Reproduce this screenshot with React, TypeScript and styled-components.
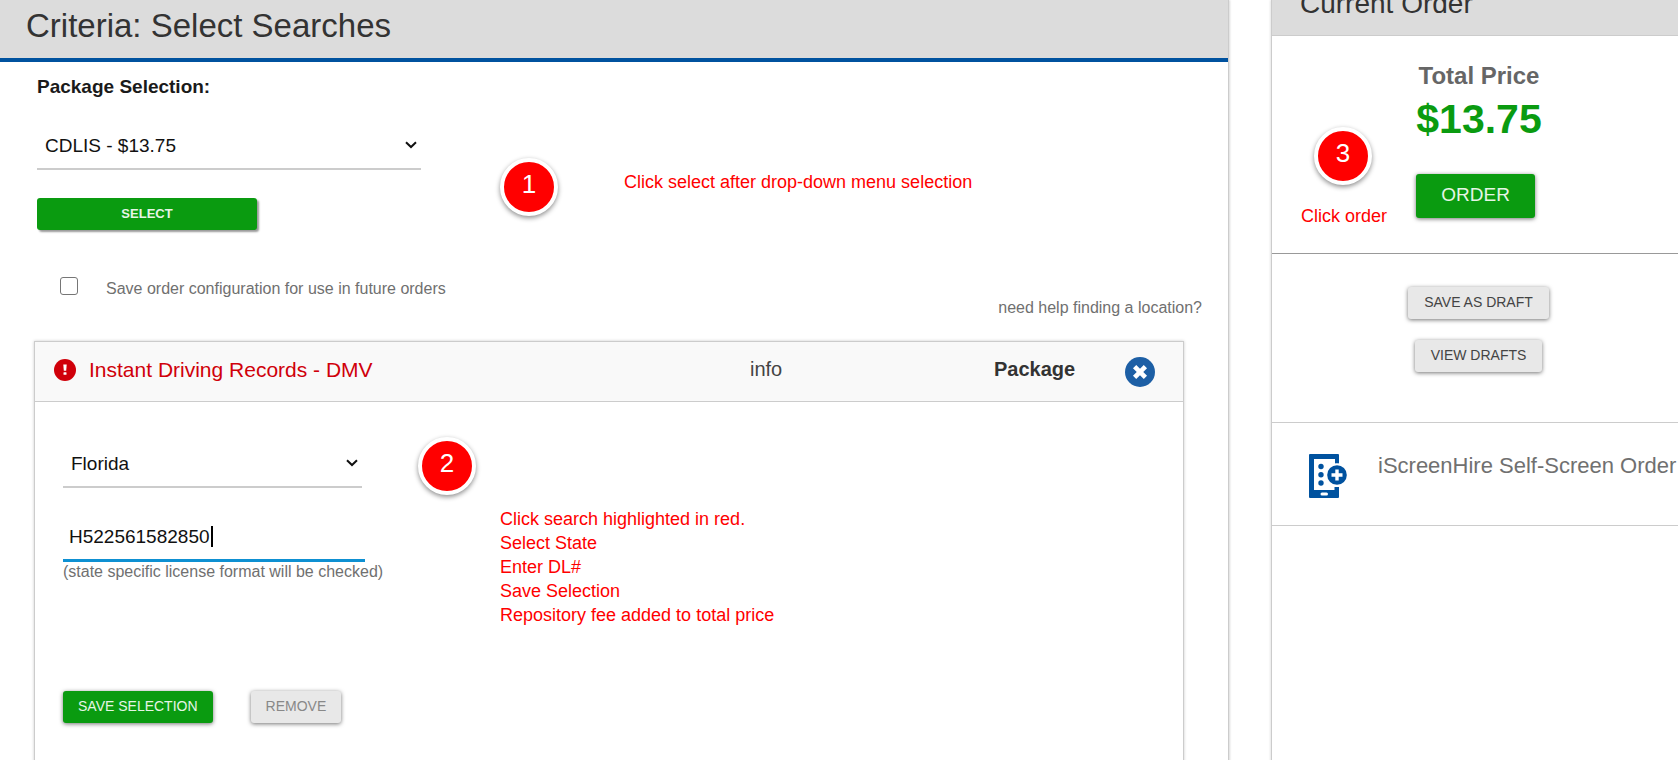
import React from "react";
import styled, { createGlobalStyle } from "styled-components";

const GlobalStyle = createGlobalStyle`
  * { box-sizing: border-box; }
  body {
    margin: 0;
    background: #fff;
    color: #333;
    font-family: "Liberation Sans", Arial, sans-serif;
  }
  button, input, select { font-family: inherit; margin: 0; }
`;

const Page = styled.div`
  display: flex;
  gap: 42px;
  min-height: 100vh;
  overflow: hidden;
`;

const Main = styled.main`
  position: relative;
  flex: 1;
  min-width: 0;
  display: flex;
  flex-direction: column;
  border-right: 1px solid #ccc;
  box-shadow: 1px 0 2px rgba(0, 0, 0, 0.15);
`;

const MainHeader = styled.header`
  padding: 0 26px 6px;
  background: #dcdcdc;
  border-bottom: 4px solid #00529f;
`;

const Title = styled.h1`
  margin: 0;
  font-size: 33px;
  font-weight: 400;
  line-height: 52px;
`;

const PackageForm = styled.section`
  display: flex;
  flex-direction: column;
  align-items: flex-start;
  padding: 13px 26px 0 37px;
`;

const FieldLabel = styled.label`
  color: #1a1a1a;
  font-size: 19px;
  font-weight: 700;
  line-height: 24px;
`;

const SelectWrap = styled.div<{ $width: number; $top?: number }>`
  position: relative;
  width: ${(p) => p.$width}px;
  margin-top: ${(p) => p.$top ?? 0}px;
`;

const Select = styled.select`
  display: block;
  width: 100%;
  height: 46px;
  padding: 0 32px 2px 8px;
  appearance: none;
  border: 0;
  border-bottom: 2px solid #ccc;
  border-radius: 0;
  outline: 0;
  background: transparent;
  color: #111;
  font-size: 19px;
`;

const ChevronIcon = styled.svg`
  position: absolute;
  top: 17px;
  right: 4px;
  pointer-events: none;
`;

const Button = styled.button<{ $tone?: "green" | "grey" | "muted" }>`
  height: 32px;
  padding: 0 16px 2px;
  border: 0;
  border-radius: 3px;
  background: ${(p) => (p.$tone === "green" ? "#0a9b10" : "#e8e8e8")};
  color: ${(p) =>
    p.$tone === "green" ? "#e6f5e6" : p.$tone === "muted" ? "#888" : "#444"};
  box-shadow: 0 1px 4px rgba(0, 0, 0, 0.55);
  font-size: 14px;
  white-space: nowrap;
`;

const SelectButton = styled(Button)`
  width: 220px;
  margin-top: 28px;
  box-shadow: 2px 2px 2px rgba(0, 0, 0, 0.4);
  font-size: 13px;
  font-weight: 700;
`;

const OrderButton = styled(Button)`
  height: 44px;
  padding: 0 25px 2px;
  font-size: 19px;
`;

const OptionsRow = styled.div`
  align-self: stretch;
  display: flex;
  justify-content: space-between;
  align-items: flex-start;
  margin-top: 47px;
  color: #707070;
  font-size: 16px;
`;

const CheckLabel = styled.label`
  display: flex;
  gap: 28px;
  padding-left: 23px;
  line-height: 24px;
`;

const Checkbox = styled.input`
  width: 18px;
  height: 18px;
  appearance: none;
  border: 1px solid #767676;
  border-radius: 3px;
  background: #fff;
`;

const HelpLink = styled.a`
  margin-top: 21px;
  color: inherit;
  line-height: 20px;
  text-decoration: none;
`;

const Card = styled.section`
  flex: 1;
  margin: 23px 44px 0 34px;
  border: 1px solid #ccc;
  border-bottom: 0;
  box-shadow: 0 0 3px rgba(0, 0, 0, 0.2);
`;

const CardHeader = styled.header`
  display: grid;
  grid-template-columns: minmax(0, 1fr) 244px 131px 58px;
  align-items: center;
  height: 60px;
  padding-bottom: 4px;
  border-bottom: 1px solid #ccc;
  background: #f9f9f9;
  font-size: 21px;
`;

const CardTitle = styled.h2`
  display: flex;
  align-items: center;
  gap: 13px;
  margin: 0;
  padding-left: 19px;
  color: #d0000a;
  font-size: inherit;
  font-weight: 400;
`;

const InfoLink = styled.a`
  color: #444;
  font-size: 20px;
  text-decoration: none;
`;

const PackageTag = styled.strong`
  font-size: 20px;
`;

const IconButton = styled.button`
  display: flex;
  width: 30px;
  padding: 4px 0 0;
  border: 0;
  background: none;
`;

const CardBody = styled.div`
  padding: 40px 28px;
`;

const LicenseField = styled.div`
  position: relative;
  width: 302px;
  margin-top: 27px;
`;

const LicenseInput = styled.input`
  display: block;
  width: 100%;
  height: 47px;
  padding: 0 6px;
  border: 0;
  border-bottom: 3px solid #0e90d2;
  outline: 0;
  background: transparent;
  color: #111;
  font-size: 19px;
`;

const Caret = styled.span`
  position: absolute;
  top: 11px;
  left: 148px;
  width: 2px;
  height: 21px;
  background: #000;
`;

const Hint = styled.p`
  margin: 0;
  color: #707070;
  font-size: 16px;
  line-height: 20px;
`;

const Actions = styled.div`
  display: flex;
  gap: 38px;
  margin-top: 109px;

  ${Button} {
    padding: 0 15px 2px;
  }
`;

const Sidebar = styled.aside`
  position: relative;
  flex: 0 0 407px;
  border-left: 1px solid #ccc;
  box-shadow: -1px 0 2px rgba(0, 0, 0, 0.1);
`;

const SideHeader = styled.header`
  height: 64px;
  margin-top: -28px;
  padding-left: 28px;
  border-bottom: 1px solid #ccc;
  background: #dcdcdc;
`;

const SideTitle = styled.h2`
  margin: 0;
  font-size: 28px;
  font-weight: 400;
  line-height: 64px;
`;

const Summary = styled.section`
  display: flex;
  justify-content: center;
  padding: 24px 0 35px 8px;
  border-bottom: 1px solid #999;
`;

const SummaryStack = styled.div`
  display: flex;
  flex-direction: column;
  align-items: flex-start;
`;

const TotalLabel = styled.div`
  align-self: center;
  color: #666;
  font-size: 24px;
  font-weight: 700;
  line-height: 32px;
`;

const TotalValue = styled.div`
  margin-bottom: 28px;
  color: #0a9b10;
  font-size: 41px;
  font-weight: 700;
  line-height: 54px;
`;

const Drafts = styled.section`
  display: flex;
  flex-direction: column;
  align-items: center;
  gap: 21px;
  padding: 33px 0 50px 7px;
  border-bottom: 1px solid #ccc;
`;

const SelfScreen = styled.a`
  display: flex;
  gap: 31px;
  padding: 31px 0 27px 37px;
  border-bottom: 1px solid #ccc;
  color: #707070;
  font-size: 22px;
  line-height: 24px;
  text-decoration: none;
  white-space: nowrap;
`;

const Step = styled.span<{ $x: number; $y: number }>`
  position: absolute;
  left: ${(p) => p.$x}px;
  top: ${(p) => p.$y}px;
  width: 58px;
  height: 58px;
  border: 4px solid #fff;
  border-radius: 50%;
  background: #f00;
  box-shadow: 0 2px 5px rgba(0, 0, 0, 0.45);
  color: #fff;
  font-size: 26px;
  line-height: 44px;
  text-align: center;
`;

const Note = styled.p<{ $x: number; $y: number }>`
  position: absolute;
  left: ${(p) => p.$x}px;
  top: ${(p) => p.$y}px;
  margin: 0;
  color: #f00;
  font-size: 18px;
  line-height: 24px;
  white-space: pre-line;
`;

const Chevron = () => (
  <ChevronIcon width="12" height="8" viewBox="0 0 12 8" aria-hidden="true">
    <path d="M1 1.2 6 6l5-4.8" fill="none" stroke="#111" strokeWidth="2" />
  </ChevronIcon>
);

const AlertIcon = () => (
  <svg width="22" height="22" viewBox="0 0 22 22" aria-hidden="true">
    <circle cx="11" cy="11" r="11" fill="#d0000a" />
    <path d="M9.300 5.500h3.400l-.5 6.300H9.800z" fill="#fff" />
    <rect x="9.500" y="13.200" width="3" height="2.600" rx=".5" fill="#fff" />
  </svg>
);

const CloseIcon = () => (
  <svg width="30" height="30" viewBox="0 0 30 30" aria-hidden="true">
    <circle cx="15" cy="15" r="15" fill="#1d5fa5" />
    <path d="m9.600 9.600 10.800 10.800M20.400 9.600 9.600 20.400" stroke="#fff" strokeWidth="4.600" />
  </svg>
);

const PhoneIcon = () => (
  <svg width="38" height="44" viewBox="0 0 38 44" aria-hidden="true">
    <path
      d="M1 0h28q1 0 1 1v8.500h-4V5H5v31h20.500v-3H30v10q0 1-1 1H1q-1 0-1-1V1q0-1 1-1z"
      fill="#00529f"
    />
    <circle cx="28" cy="21" r="11.600" fill="#fff" />
    <rect x="11.500" y="38.500" width="7.500" height="3" rx="1.500" fill="#fff" />
    <g fill="#00529f">
      <circle cx="12" cy="12.500" r="2.700" />
      <circle cx="12" cy="20.800" r="2.700" />
      <circle cx="12" cy="29" r="2.700" />
      <circle cx="28" cy="21" r="9.800" />
    </g>
    <path d="M28 15.500v11M22.500 21h11" stroke="#fff" strokeWidth="3.400" />
  </svg>
);

export default function App() {
  return (
    <>
      <GlobalStyle />
      <Page>
        <Main>
          <MainHeader>
            <Title>Criteria: Select Searches</Title>
          </MainHeader>

          <PackageForm>
            <FieldLabel htmlFor="package">Package Selection:</FieldLabel>
            <SelectWrap $width={384} $top={25}>
              <Select id="package">
                <option>CDLIS - $13.75</option>
              </Select>
              <Chevron />
            </SelectWrap>
            <SelectButton $tone="green">SELECT</SelectButton>
            <OptionsRow>
              <CheckLabel>
                <Checkbox type="checkbox" />
                Save order configuration for use in future orders
              </CheckLabel>
              <HelpLink href="#location-help">need help finding a location?</HelpLink>
            </OptionsRow>
          </PackageForm>

          <Card>
            <CardHeader>
              <CardTitle>
                <AlertIcon />
                Instant Driving Records - DMV
              </CardTitle>
              <InfoLink href="#info">info</InfoLink>
              <PackageTag>Package</PackageTag>
              <IconButton aria-label="Remove search">
                <CloseIcon />
              </IconButton>
            </CardHeader>
            <CardBody>
              <SelectWrap $width={299}>
                <Select aria-label="State">
                  <option>Florida</option>
                </Select>
                <Chevron />
              </SelectWrap>
              <LicenseField>
                <LicenseInput
                  type="text"
                  aria-label="License number"
                  aria-describedby="license-hint"
                  defaultValue="H522561582850"
                />
                <Caret />
              </LicenseField>
              <Hint id="license-hint">(state specific license format will be checked)</Hint>
              <Actions>
                <Button $tone="green">SAVE SELECTION</Button>
                <Button $tone="muted">REMOVE</Button>
              </Actions>
            </CardBody>
          </Card>

          <Step $x={500} $y={158}>1</Step>
          <Note $x={624} $y={170}>Click select after drop-down menu selection</Note>
          <Step $x={418} $y={437}>2</Step>
          <Note $x={500} $y={507}>
            {"Click search highlighted in red.\nSelect State\nEnter DL#\nSave Selection\nRepository fee added to total price"}
          </Note>
        </Main>

        <Sidebar>
          <SideHeader>
            <SideTitle>Current Order</SideTitle>
          </SideHeader>
          <Summary>
            <SummaryStack>
              <TotalLabel>Total Price</TotalLabel>
              <TotalValue>$13.75</TotalValue>
              <OrderButton $tone="green">ORDER</OrderButton>
            </SummaryStack>
          </Summary>
          <Drafts>
            <Button>SAVE AS DRAFT</Button>
            <Button>VIEW DRAFTS</Button>
          </Drafts>
          <SelfScreen href="#self-screen">
            <PhoneIcon />
            iScreenHire Self-Screen Order
          </SelfScreen>

          <Step $x={42} $y={127}>3</Step>
          <Note $x={29} $y={204}>Click order</Note>
        </Sidebar>
      </Page>
    </>
  );
}
